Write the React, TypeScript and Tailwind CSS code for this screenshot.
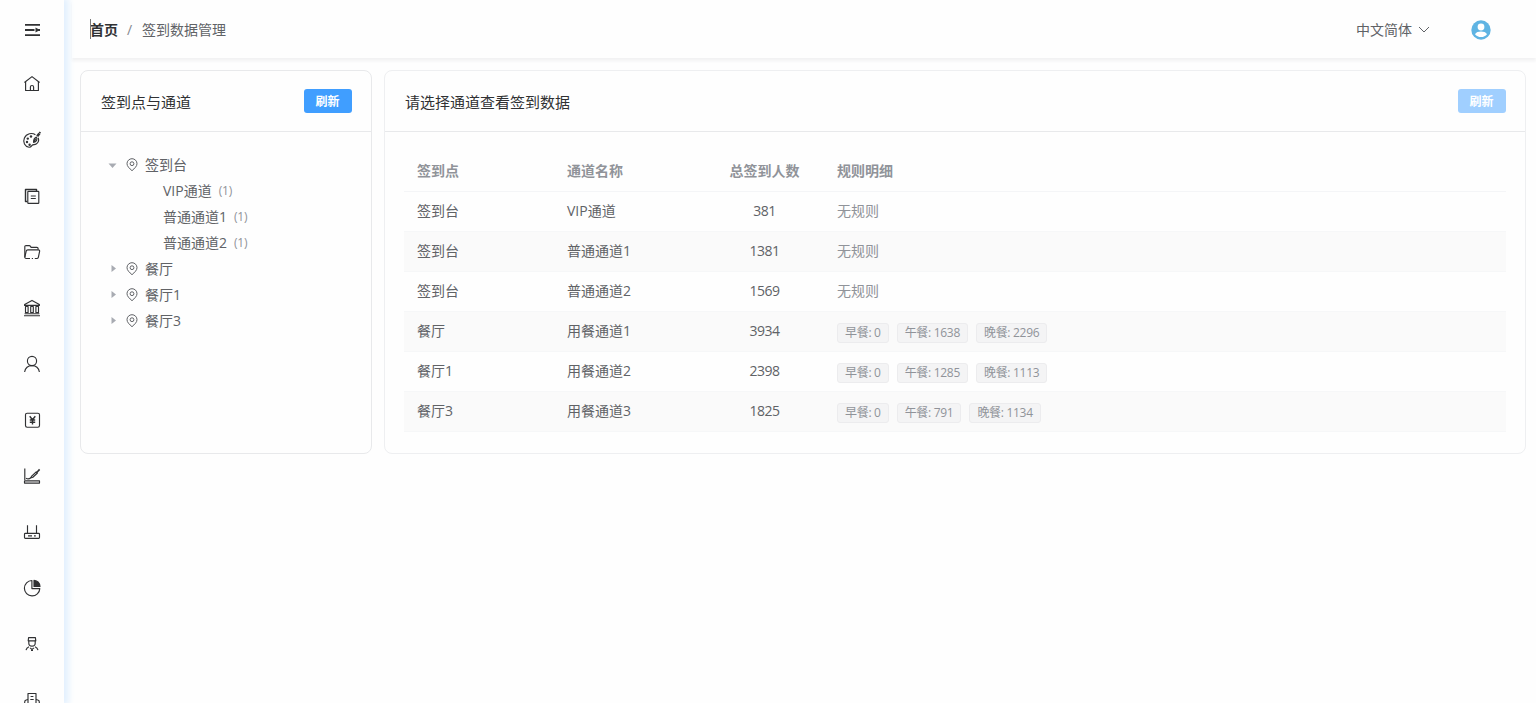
import React from "react";

const sideIcons: React.ReactNode[] = [
    // home
    <>
        <path d="M2.4 8.500 10 2.600 17.600 8.500" />
        <path d="M3.600 7.800v8.700h12.800V7.800" />
        <path d="M8.400 16.500v-3.400a1.600 1.600 0 0 1 3.200 0v3.400" />
    </>,
    // palette
    <>
        <path d="M13.400 4.800C10 2.400 4.400 3.400 2.400 8c-1.800 4.300.4 8.600 4.600 9.200 2 .2 2.200-.8 3-1.800 1-1.200 2.600-.4 4.200-1.400 2.100-1.300 2.900-3.600 2-6.200" />
        <path d="m15.200 6.200 2.200-2.700" strokeWidth="2.600" />
        <path d="m17.400 3.200.9-1.200" strokeWidth="1.800" />
        <path d="M11.600 12.400c-.2-2.400.6-4.400 2.800-5.400 1.400 2.200 0 5-2.800 5.400zM12 12l1.800-3.600" />
        <g fill="currentColor" stroke="none">
            <circle cx="9" cy="6.500" r="1.200" />
            <circle cx="5.800" cy="8.600" r="1.200" />
            <circle cx="5" cy="12" r="1.200" />
            <circle cx="7.600" cy="14.700" r="1.200" />
        </g>
    </>,
    // document
    <>
        <path d="M5.400 15.500H3.500V3.500H14.500V5" strokeWidth="1.400" />
        <rect x="5.800" y="5.300" width="11" height="12" rx=".6" />
        <path d="M8.800 10h5M8.800 12.500h5" />
    </>,
    // folder
    <>
        <path d="M2.800 15.200V4.800c0-.8.5-1.200 1.200-1.200h3.200c.8 0 1 .3 1.400.9l.5.9h5.800c.8 0 1.200.5 1.200 1.200v1" />
        <path d="M8 16.500H4.200c-1 0-1.500-.8-1.300-1.700l1.300-5.600c.2-.9.700-1.300 1.600-1.300h10.600c1 0 1.400.6 1.200 1.500l-1.200 5.800c-.3.900-.8 1.300-1.600 1.300h-2M9.800 16.500h1.200" />
    </>,
    // bank
    <>
        <path d="M2.600 6.600 10 2.400l7.400 4.200v.8H2.600z" />
        <rect x="3.500" y="8.500" width="2.600" height="6" />
        <rect x="8.700" y="8.500" width="2.600" height="6" />
        <rect x="13.900" y="8.500" width="2.600" height="6" />
        <path d="M2.600 15.700h14.800M2 17.700h16" />
    </>,
    // user
    <>
        <circle cx="10" cy="7" r="4.600" />
        <path d="M2.600 18c.7-3.900 3.500-6.400 7.400-6.400s6.700 2.500 7.400 6.400" />
    </>,
    // yen
    <>
        <rect x="3.500" y="3.200" width="14" height="14" rx="1.600" />
        <path d="m7.700 6.200 2.800 3.600 2.800-3.600M7.800 10h5.400M7.800 12.200h5.400M10.500 9.600v5" strokeWidth="1.400" />
    </>,
    // trend
    <>
        <path d="M2.800 2.500v11.600M2.500 14.900h15v2.200h-15z" />
        <path d="M4 12.300c2 1.200 3.600.6 5-.8" />
        <path d="m9.400 10.300 4.800-4.500 1.200 1.200-4.800 4.500-1.600.3z" />
        <path d="m15 6.200 2.600-2.800" strokeWidth="1.600" />
    </>,
    // router
    <>
        <rect x="2.500" y="11.400" width="15" height="4.900" rx=".8" />
        <path d="M5.500 3.300v8M14.500 3.300v8" />
        <path d="M6 13.900h4M12 13.900h1.800" strokeWidth="1.400" />
    </>,
    // pie
    <>
        <path d="M9.900 2.500a7.700 7.700 0 1 0 7.900 8.100H9.900z" />
        <path d="M12 2.300a6.800 6.800 0 0 1 6 6.200h-6z" fill="currentColor" />
    </>,
    // worker
    <>
        <path d="M6.600 3.600h6.800l.4 3.200H6.200z" />
        <path d="M6.800 6.800v2.400c0 1.500 1.400 2.900 3.200 2.900s3.200-1.400 3.200-2.900V6.800" />
        <path d="M7 12.800c-1.600.6-2.600 1.700-3 3.400M13 12.800c1.600.6 2.600 1.700 3 3.400M8 13.900l2 1.500 2-1.500M9 16.300h2" />
    </>,
    // building
    <>
        <path d="M6 18V3.500h8V18" />
        <path d="M6 9.500 4.200 10a2 2 0 0 0-1.500 2v6M14 9.500l1.800.5a2 2 0 0 1 1.500 2v6M8.600 6.500h2.800M8.300 9.500h3.400" />
    </>,
];

const tree = [
    {
        name: "签到台",
        open: true,
        children: ["VIP通道", "普通通道1", "普通通道2"],
    },
    { name: "餐厅", open: false, children: [] },
    { name: "餐厅1", open: false, children: [] },
    { name: "餐厅3", open: false, children: [] },
];

const rows = [
    { point: "签到台", channel: "VIP通道", total: 381, rules: [] },
    { point: "签到台", channel: "普通通道1", total: 1381, rules: [] },
    { point: "签到台", channel: "普通通道2", total: 1569, rules: [] },
    { point: "餐厅", channel: "用餐通道1", total: 3934, rules: ["早餐: 0", "午餐: 1638", "晚餐: 2296"] },
    { point: "餐厅1", channel: "用餐通道2", total: 2398, rules: ["早餐: 0", "午餐: 1285", "晚餐: 1113"] },
    { point: "餐厅3", channel: "用餐通道3", total: 1825, rules: ["早餐: 0", "午餐: 791", "晚餐: 1134"] },
];

const Sidebar = () => (
    <aside className="relative z-10 flex h-full w-16 shrink-0 flex-col bg-[#fefefe] text-[#303133] shadow-[3px_0_6px_2px_#e4f1fe]">
        <button className="flex h-14 shrink-0 items-center justify-center pt-1" type="button">
            <svg className="size-5" viewBox="0 0 20 20" fill="currentColor">
                <path d="M3 4h15v1.800H3zM3 9.100h9.500v1.800H3zM3 14.200h15V16H3zM13.500 7.600l2.700 1.500H18v1.800h-1.800l-2.700 1.500z" />
            </svg>
        </button>
        {sideIcons.map((icon, i) => (
            <a key={i} className="flex h-14 shrink-0 items-center justify-center" href="#">
                <svg
                    className="size-5"
                    viewBox="0 0 20 20"
                    fill="none"
                    stroke="currentColor"
                    strokeWidth="1.15"
                    strokeLinejoin="round"
                >
                    {icon}
                </svg>
            </a>
        ))}
    </aside>
);

const Header = () => (
    <header className="ml-2 flex h-[58px] shrink-0 items-center justify-between bg-[#fefefe] pl-[18px] pr-[45px] pt-0.5 shadow-[0_3px_3px_#f2f2f3]">
        <div className="flex items-center text-sm">
            <span className="h-5 w-px -translate-y-px bg-[#777]"></span>
            <a className="-ml-px font-bold text-[#303133]" href="#">首页</a>
            <span className="ml-[9px] mr-[9px] w-1.5 text-[#85888e]">/</span>
            <span className="text-[#606266]">签到数据管理</span>
        </div>
        <div className="flex items-center text-sm text-[#606266]">
            <span>中文简体</span>
            <svg className="ml-1.5 h-3 w-3" viewBox="0 0 12 12" fill="none" stroke="currentColor">
                <path d="m1 3 5 5 5-5" />
            </svg>
            <svg className="ml-[41px] size-5" viewBox="0 0 20 20">
                <circle cx="10" cy="10" r="9.700" fill="#5fb4e3" />
                <circle cx="10" cy="7" r="3.400" fill="#fff" />
                <path d="M4 14.200c1-2 3.500-2.700 6-2.700s5 .7 6 2.700c-1.500 1.900-3.500 2.800-6 2.800s-4.500-.9-6-2.800z" fill="#fff" />
            </svg>
        </div>
    </header>
);

const CardHeader = ({ title, disabled }: { title: string; disabled?: boolean }) => (
    <div className="flex h-[61px] items-center justify-between border-b border-[#e8e9eb] pl-5 pr-[19.5px]">
        <span className="pt-0.5 text-[15px] text-[#303133]">{title}</span>
        <button
            className={
                "h-6 w-12 rounded-[3px] pt-px text-xs font-bold text-white " +
                (disabled ? "bg-[#a0cfff]" : "bg-[#409eff]")
            }
            type="button"
            disabled={disabled}
        >
            刷新
        </button>
    </div>
);

const Pin = () => (
    <svg className="mr-1.5 size-3.5" viewBox="0 0 14 14" fill="none" stroke="#606266">
        <path d="M7 12.700C4.300 10.300 2 8.200 2 5.700a5 5 0 0 1 10 0c0 2.500-2.300 4.600-5 7z" />
        <circle cx="7" cy="5.700" r="1.900" />
    </svg>
);

const ChannelTree = () => (
    <section className="w-[292px] rounded-lg border border-[#e8e9eb]">
        <CardHeader title="签到点与通道" />
        <div className="px-5 pt-5 text-sm text-[#606266]">
            {tree.map((node) => (
                <div key={node.name}>
                    <div className="flex h-[26px] items-center pl-[7px]">
                        <svg className="mr-[7px] size-2.5" viewBox="0 0 10 10" fill="#a8abb2">
                            <path d={node.open ? "M.5 3.500h8L4.500 8z" : "M3.500 1v7L8 4.500z"} />
                        </svg>
                        <Pin />
                        <span>{node.name}</span>
                    </div>
                    {node.children.map((c) => (
                        <div key={c} className="flex h-[26px] items-center pl-[62px]">
                            <span>{c}</span>
                            <span className="ml-[7px] text-xs tracking-[-0.2px] text-[#909399]">(1)</span>
                        </div>
                    ))}
                </div>
            ))}
        </div>
    </section>
);

const DataTable = () => (
    <section className="flex-1 rounded-lg border border-[#eeeff1]">
        <CardHeader title="请选择通道查看签到数据" disabled />
        <div className="px-[19px] pt-5">
            <table className="w-full table-fixed text-left text-sm text-[#606266]">
                <colgroup>
                    <col className="w-[150px]" />
                    <col className="w-[150px]" />
                    <col className="w-[120px]" />
                    <col />
                </colgroup>
                <thead>
                    <tr className="h-[39px] border-b border-[#f4f5f7] text-[#909399]">
                        <th className="py-0 pl-[13px] font-bold">签到点</th>
                        <th className="py-0 pl-[13px] font-bold">通道名称</th>
                        <th className="py-0 pl-px text-center font-bold">总签到人数</th>
                        <th className="py-0 pl-[13px] font-bold">规则明细</th>
                    </tr>
                </thead>
                <tbody>
                    {rows.map((r, i) => (
                        <tr
                            key={i}
                            className={"h-10 border-b border-[#f6f7f8]" + (i % 2 ? " bg-[#fafafa]" : "")}
                        >
                            <td className="py-0 pl-[13px]">{r.point}</td>
                            <td className="py-0 pl-[13px]">{r.channel}</td>
                            <td className="py-0 pl-px text-center tracking-[-0.5px]">{r.total}</td>
                            <td className="py-0 pl-[13px]">
                                {r.rules.length ? (
                                    <div className="flex gap-2 pt-[3px]">
                                        {r.rules.map((t) => (
                                            <span
                                                key={t}
                                                className="h-5 rounded-[3px] border border-[#ececee] bg-[#f4f4f5] px-[7px] text-xs leading-[18px] tracking-[-0.3px] whitespace-nowrap text-[#909399]"
                                            >
                                                {t}
                                            </span>
                                        ))}
                                    </div>
                                ) : (
                                    <span className="text-[#909399]">无规则</span>
                                )}
                            </td>
                        </tr>
                    ))}
                </tbody>
            </table>
        </div>
    </section>
);

const App = () => (
    <div className="flex h-[703px] overflow-hidden bg-[#fefefe] font-['Open_Sans','Noto_Sans_CJK_SC',sans-serif]">
        <Sidebar />
        <div className="flex min-w-0 flex-1 flex-col">
            <Header />
            <main className="flex h-[396px] gap-3 pl-4 pr-[10px] pt-3">
                <ChannelTree />
                <DataTable />
            </main>
        </div>
    </div>
);

export default App;
